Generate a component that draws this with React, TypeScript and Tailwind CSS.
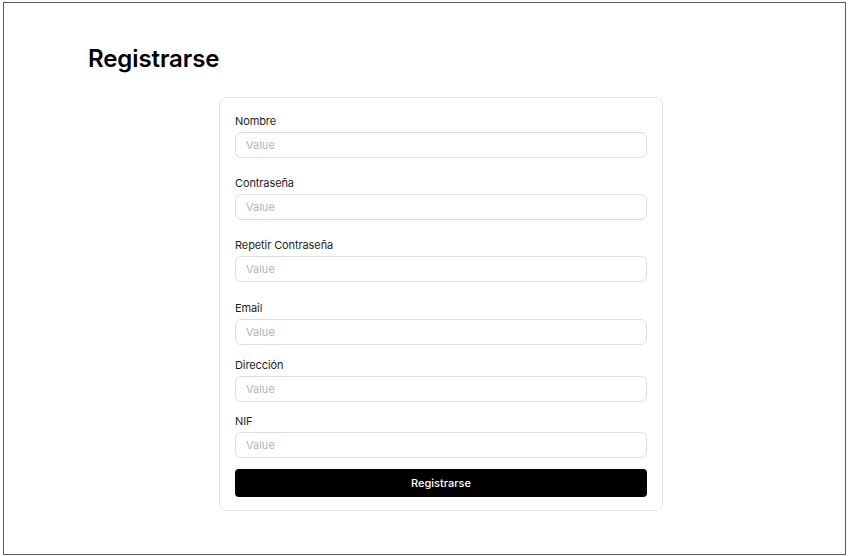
import React from "react";

const fields: { label: string; mt: string }[] = [
  { label: "Nombre", mt: "mt-0" },
  { label: "Contraseña", mt: "mt-[17px]" },
  { label: "Repetir Contraseña", mt: "mt-[17px]" },
  { label: "Email", mt: "mt-[18px]" },
  { label: "Dirección", mt: "mt-[12px]" },
  { label: "NIF", mt: "mt-[11px]" },
];

export default function App() {
  return (
    <div className="w-[850px] h-[556px] bg-white font-['Inter',sans-serif] pt-[2px] pl-[3px]">
      <div className="w-[843px] h-[553px] border border-[#5a5a5a] bg-white pt-[40px] pl-[84px]">
        <h1 className="text-[24px] leading-[32px] font-semibold text-black tracking-[-0.1px]">
          Registrarse
        </h1>
        <div className="mt-[22px] ml-[131px] w-[444px] rounded-[8px] border border-[#e3e3e3] bg-white px-[15px] pt-[15px] pb-[13px]">
          {fields.map((f) => (
            <div key={f.label} className={f.mt}>
              <div className="text-[11px] leading-[16px] text-[#1e1e1e] tracking-[-0.1px]">{f.label}</div>
              <div className="mt-[3px] h-[26px] rounded-[6px] border border-[#dedede] bg-white flex items-center px-[10px]">
                <span className="text-[11px] text-[#b3b3b3]">Value</span>
              </div>
            </div>
          ))}
          <button className="mt-[11px] w-full h-[28px] rounded-[4px] bg-black text-white text-[11px] font-medium flex items-center justify-center">
            Registrarse
          </button>
        </div>
      </div>
    </div>
  );
}
